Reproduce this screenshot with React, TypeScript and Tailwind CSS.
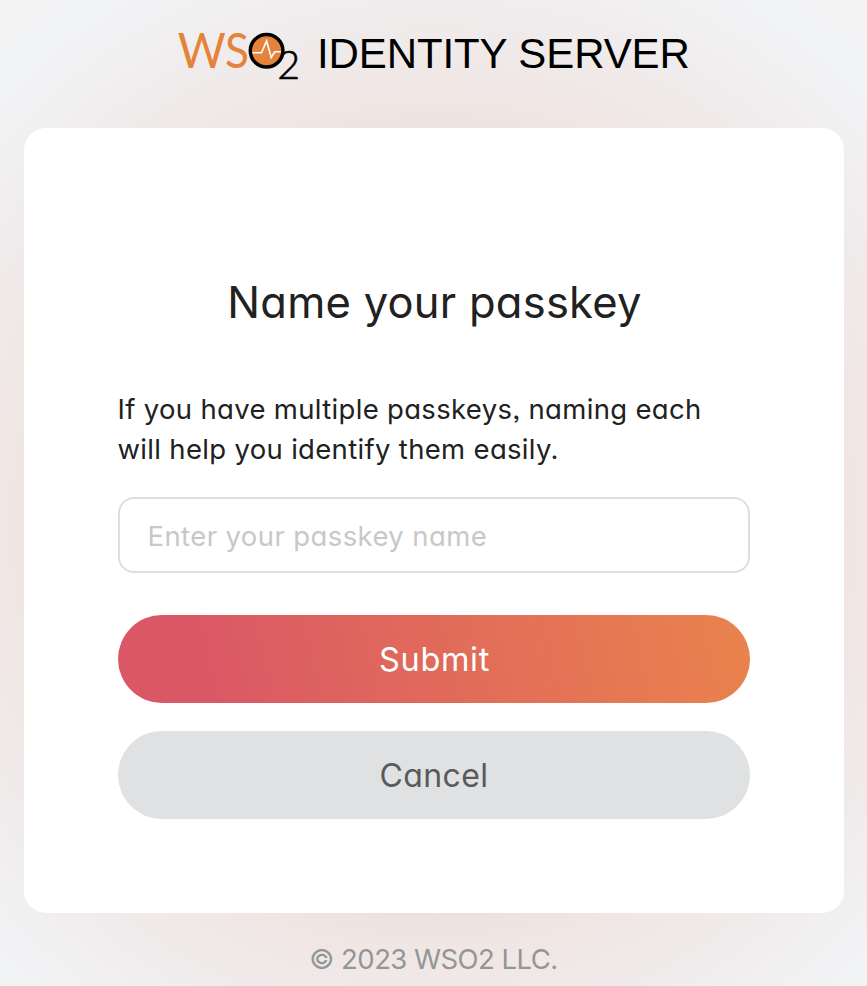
import React from "react";

const gilmer =
  "font-['Inter','Open_Sans',sans-serif] [font-feature-settings:'cv11','ss03']";

function Logo() {
  return (
    <svg className="shrink-0" width="142" height="90" viewBox="167 10 142 90" role="img" aria-label="WSO2">
      <text x="177.8" y="68.3" fontFamily="Lato, sans-serif" fontWeight="400" fontSize="49" fill="#e5833a" textLength="48" lengthAdjust="spacingAndGlyphs">W</text>
      <text x="225" y="68" fontFamily="Lato, sans-serif" fontWeight="400" fontSize="48.5" fill="#e5833a" textLength="24" lengthAdjust="spacingAndGlyphs">S</text>
      <circle cx="266.6" cy="50.8" r="16.3" fill="#e5833a" stroke="#000" strokeWidth="3.5" />
      <path d="M252.5 52.8H261.5L266.6 41L271.2 57.5L274.8 51.8H281" fill="none" stroke="#fff" strokeWidth="1.6" />
      <text x="277.3" y="78.8" fontFamily="Lato, sans-serif" fontWeight="300" fontSize="39" fill="#000" stroke="#000" strokeWidth="0.7" textLength="22.8" lengthAdjust="spacingAndGlyphs">2</text>
    </svg>
  );
}

export default function App() {
  return (
    <div className={`flex h-[986px] w-[867px] flex-col items-center overflow-hidden bg-[radial-gradient(circle_at_434px_525px,#eee1df_385px,#f0e6e4_425px,#f0edee_530px,#f2f3f5_610px,#f4f4f4_690px)] ${gilmer}`}>
      <header className="flex h-32 w-full shrink-0 items-start pl-[167px] pt-[10px]">
        <Logo />
        <h1 className="mt-[20px] ml-[8px] whitespace-nowrap font-['Liberation_Sans',sans-serif] text-[42px] leading-[47px] tracking-[-0.1px] text-black">
          IDENTITY SERVER
        </h1>
      </header>
      <main className="flex h-[785px] w-[820px] shrink-0 flex-col rounded-[22px] bg-white px-[94px]">
        <h2 className="mt-[144px] pl-[2px] text-center text-[43.5px] leading-[60px] tracking-[0.25px] whitespace-nowrap text-[#212121]">
          Name your passkey
        </h2>
        <p className="mt-[57px] text-[27.5px] leading-10 tracking-[0.32px] whitespace-nowrap text-[#212121]">
          If you have multiple passkeys, naming each
          <br />
          will help you identify them easily.
        </p>
        <input
          className="mt-[28px] h-[76px] w-full rounded-[16px] border-2 border-[#dededf] bg-white px-[28px] pt-[2px] text-[27.5px] tracking-[0.4px] outline-none placeholder:text-[#c8c8c8]"
          placeholder="Enter your passkey name"
        />
        <button className="mt-[42px] h-[88px] rounded-full bg-[linear-gradient(77deg,#da5766_12%,#e9824d_98%)] pt-[2px] pl-[2px] text-[32.5px] tracking-[0.65px] text-white">
          Submit
        </button>
        <button className="mt-[28px] h-[88px] rounded-full bg-[#e0e1e2] pt-[2px] pl-[1px] text-[32px] tracking-[0.4px] text-[#595a5b]">
          Cancel
        </button>
      </main>
      <footer className="mt-[26px] text-[27.5px] leading-10 tracking-[-0.55px] whitespace-nowrap text-[#919699]">
        © 2023 WSO2 LLC.
      </footer>
    </div>
  );
}
